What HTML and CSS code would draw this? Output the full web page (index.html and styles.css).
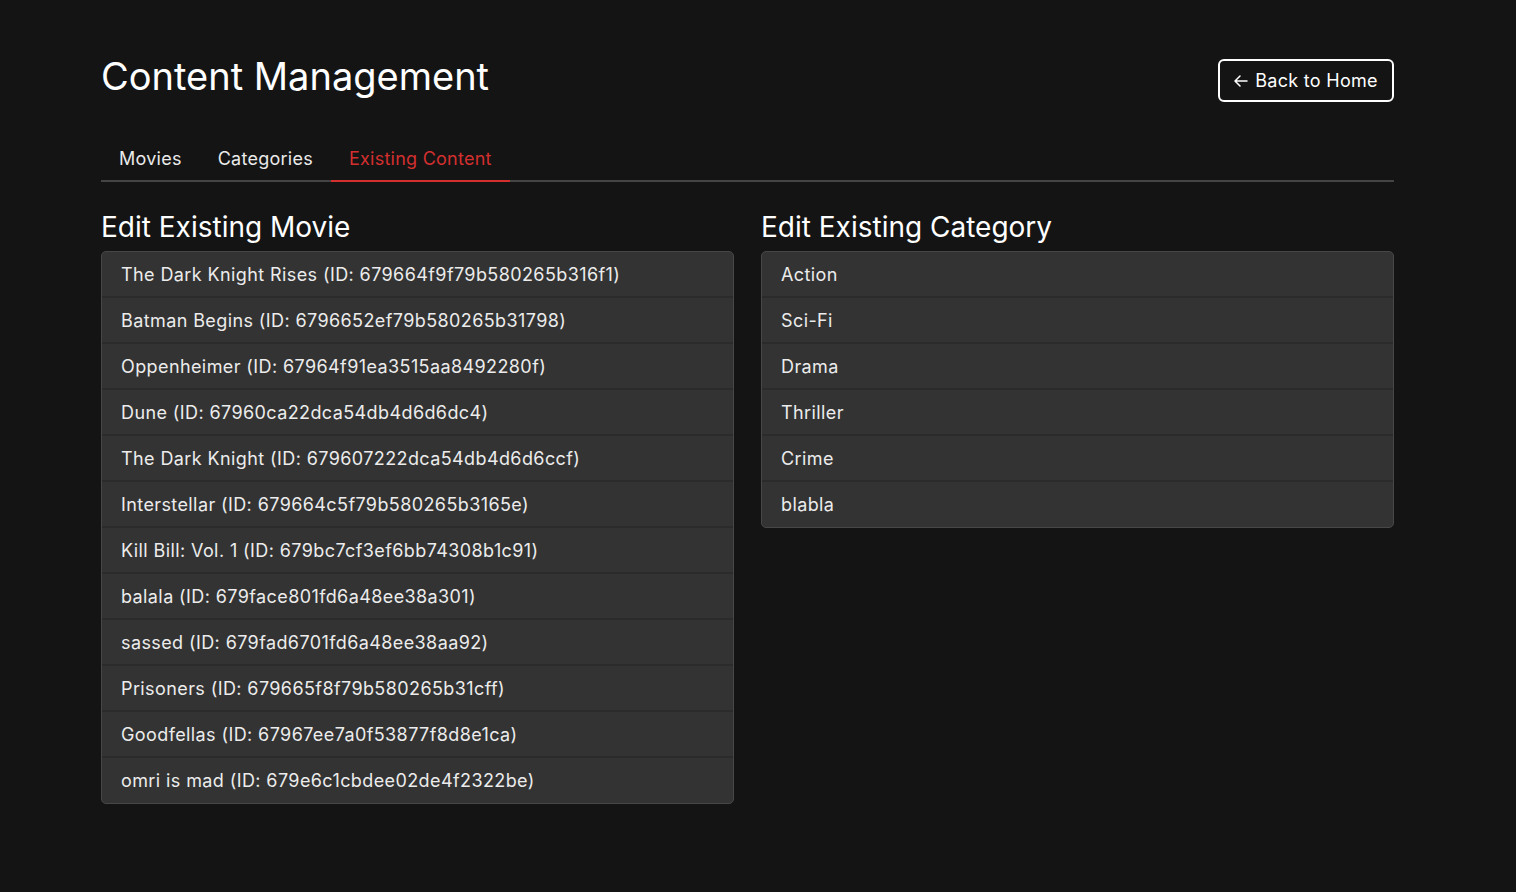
FILE: index.html
```html
<!DOCTYPE html>
<html lang="en">
<head>
<meta charset="utf-8">
<title>Content Management</title>
<link rel="stylesheet" href="styles.css">
</head>
<body>
<div class="page">
  <header class="header">
    <h1 class="title">Content Management</h1>
    <button class="back-btn" type="button">
      <svg class="arrow" width="14" height="12" viewBox="0 0 14 12" fill="none" stroke="currentColor" stroke-width="1.5" stroke-linecap="round" stroke-linejoin="round"><path d="M13 6H1.5M6 1L1 6l5 5"/></svg>
      Back to Home
    </button>
  </header>
  <nav class="tabs">
    <div class="tab">Movies</div>
    <div class="tab">Categories</div>
    <div class="tab active">Existing Content</div>
  </nav>
  <main class="columns">
    <section>
      <h2 class="section-title">Edit Existing Movie</h2>
      <ul class="list">
        <li>The Dark Knight Rises (ID: 679664f9f79b580265b316f1)</li>
        <li>Batman Begins (ID: 6796652ef79b580265b31798)</li>
        <li>Oppenheimer (ID: 67964f91ea3515aa8492280f)</li>
        <li>Dune (ID: 67960ca22dca54db4d6d6dc4)</li>
        <li>The Dark Knight (ID: 679607222dca54db4d6d6ccf)</li>
        <li>Interstellar (ID: 679664c5f79b580265b3165e)</li>
        <li>Kill Bill: Vol. 1 (ID: 679bc7cf3ef6bb74308b1c91)</li>
        <li>balala (ID: 679face801fd6a48ee38a301)</li>
        <li>sassed (ID: 679fad6701fd6a48ee38aa92)</li>
        <li>Prisoners (ID: 679665f8f79b580265b31cff)</li>
        <li>Goodfellas (ID: 67967ee7a0f53877f8d8e1ca)</li>
        <li>omri is mad (ID: 679e6c1cbdee02de4f2322be)</li>
      </ul>
    </section>
    <section>
      <h2 class="section-title">Edit Existing Category</h2>
      <ul class="list">
        <li>Action</li>
        <li>Sci-Fi</li>
        <li>Drama</li>
        <li>Thriller</li>
        <li>Crime</li>
        <li>blabla</li>
      </ul>
    </section>
  </main>
</div>
</body>
</html>
```
FILE: styles.css
```css
* { box-sizing: border-box; }
html, body {
  margin: 0;
  background: #141414;
  color: #fff;
  font-family: Inter, "Noto Sans", sans-serif;
}
.page {
  width: 1293px;
  margin-left: 101px;
  padding-top: 52px;
}
.header {
  display: flex;
  justify-content: space-between;
  align-items: flex-start;
}
.title {
  margin: 0;
  font-size: 38px;
  font-weight: 400;
  line-height: 48px;
  letter-spacing: 0;
}
.back-btn {
  margin-top: 7px;
  height: 43px;
  width: 176px;
  padding: 0 14px;
  display: flex;
  align-items: center;
  justify-content: center;
  gap: 7px;
  background: transparent;
  color: #fff;
  border: 2px solid #fff;
  border-radius: 6px;
  font-family: Inter, "Noto Sans", sans-serif;
  font-size: 18px;
  letter-spacing: 0.3px;
}
.arrow { display: block; }
.tabs {
  margin-top: 34px;
  display: flex;
  border-bottom: 2px solid #444;
}
.tab {
  padding: 0 18px;
  height: 46px;
  display: flex;
  align-items: center;
  font-size: 18px;
  letter-spacing: 0.25px;
  color: #eaeaea;
  border-bottom: 2px solid transparent;
  margin-bottom: -2px;
}
.tab.active {
  color: #d32f2f;
  border-bottom-color: #d32f2f;
}
.columns {
  display: grid;
  grid-template-columns: 1fr 1fr;
  gap: 27px;
  margin-top: 28px;
}
.section-title {
  margin: 0 0 7px;
  font-size: 28px;
  font-weight: 400;
  line-height: 34px;
  letter-spacing: 0;
}
.list {
  list-style: none;
  margin: 0;
  padding: 0;
  background: #333;
  border: 1px solid #474747;
  border-radius: 5px;
  overflow: hidden;
}
.list li {
  height: 46px;
  padding: 0 19px;
  display: flex;
  align-items: center;
  font-size: 18px;
  letter-spacing: 0.4px;
  color: #ececec;
  border-bottom: 2px solid #2b2b2b;
}
.list li:last-child { border-bottom: none; height: 45px; }
```
